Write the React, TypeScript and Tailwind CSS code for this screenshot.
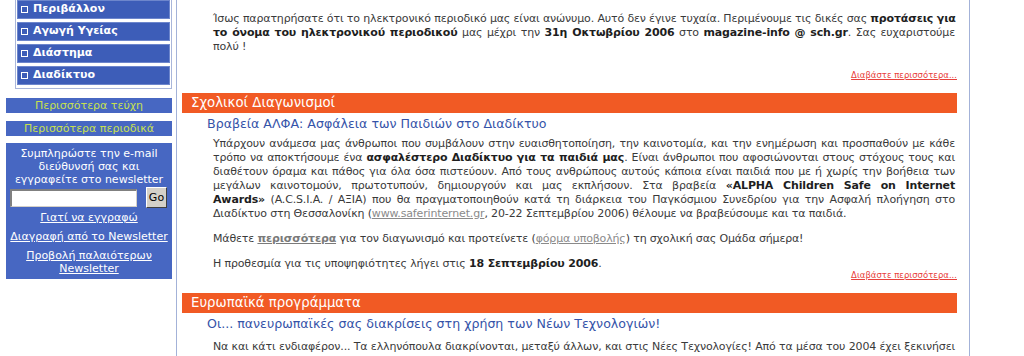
import React from "react";

const navItems = ["Περιβάλλον", "Αγωγή Υγείας", "Διάστημα", "Διαδίκτυο"];

// one full, justified line of a paragraph (keeps the reference's line breaks)
function J({ children }: { children: React.ReactNode }) {
  return <span className="block whitespace-nowrap text-justify [text-align-last:justify]">{children}</span>;
}

function B({ children }: { children: React.ReactNode }) {
  return <b className="text-[#1e1e1e]">{children}</b>;
}

function ReadMore() {
  return (
    <div className="text-right pr-[12px] text-[8.5px] leading-[10px] tracking-normal">
      <a href="#" className="text-[#e8413b] underline">
        Διαβάστε περισσότερα...
      </a>
    </div>
  );
}

function SectionBar({ title }: { title: string }) {
  return (
    <div className="ml-[5px] mr-[12px] h-[20px] bg-[#f15a24] pl-[9px] text-[13.3px] leading-[20px] text-white tracking-normal">
      {title}
    </div>
  );
}

function Sidebar() {
  return (
    <aside className="w-[176px] shrink-0 text-[11px]">
      {/* category menu (scrolled, top cut off) */}
      <div className="ml-[15px] mr-[4px] -mt-[3px] border border-[#a9b6da] px-[1px] pt-[2px] pb-[3px] flex flex-col gap-[3px]">
        {navItems.map((n) => (
          <div
            key={n}
            className="h-[19px] bg-[#3d5db8] border border-[#6d86cc] flex items-center gap-[5px] pl-[3px] font-bold text-white"
          >
            <span className="w-[7px] h-[7px] border border-white" />
            {n}
          </div>
        ))}
      </div>

      <div className="mt-[9px] ml-[6px] mr-[4px] h-[15px] bg-[#4767c2] text-center leading-[15px] text-[#c8e14e]">
        Περισσότερα τεύχη
      </div>
      <div className="mt-[8px] ml-[6px] mr-[4px] h-[15px] bg-[#4767c2] text-center leading-[15px] text-[#c8e14e]">
        Περισσότερα περιοδικά
      </div>

      {/* newsletter */}
      <div className="mt-[7px] ml-[6px] mr-[4px] bg-[#4767c2] text-white text-center pt-[4px] pb-[4px] px-[4px]">
        <p className="leading-[13px]">
          Συμπληρώστε την e-mail
          <br />
          διεύθυνσή σας και
          <br />
          εγγραφείτε στο newsletter
        </p>
        <div className="mt-[1px] flex items-center justify-between">
          <input
            className="w-[127px] h-[18px] bg-white border-t-2 border-l-2 border-[#808080] border-b border-r border-b-[#d4d0c8] border-r-[#d4d0c8]"
            type="text"
          />
          <button className="w-[21px] h-[21px] mr-[1px] bg-[#d4d0c8] border border-t-white border-l-white border-b-[#404040] border-r-[#404040] text-black text-[11px] leading-none">
            Go
          </button>
        </div>
        <div className="mt-[3px] flex flex-col gap-[6px] leading-[13px]">
          <a href="#" className="underline">Γιατί να εγγραφώ</a>
          <a href="#" className="underline">Διαγραφή από το Newsletter</a>
          <a href="#" className="underline">
            Προβολή παλαιότερων
            <br />
            Newsletter
          </a>
        </div>
      </div>
    </aside>
  );
}

export default function App() {
  return (
    <div className="w-[1024px] h-[356px] overflow-hidden bg-white flex font-['DejaVu_Sans',sans-serif] text-[#3a3a3a]">
      <Sidebar />
      <div className="w-px shrink-0 bg-[#a3b2d8]" />

      <main className="w-[792px] shrink-0 text-[11px] leading-[14px] tracking-[-0.15px]">
        <p className="mt-[12px] ml-[36px] mr-[14px]">
          <J>
            Ίσως παρατηρήσατε ότι το ηλεκτρονικό περιοδικό μας είναι ανώνυμο. Αυτό δεν έγινε τυχαία. Περιμένουμε τις
            δικές σας <B>προτάσεις για</B>
          </J>
          <J>
            <B>το όνομα του ηλεκτρονικού περιοδικού</B> μας μέχρι την <B>31η Οκτωβρίου 2006</B> στο{" "}
            <B>magazine-info @ sch.gr</B>. Σας ευχαριστούμε
          </J>
          <span className="block">πολύ !</span>
        </p>
        <div className="mt-[16px]">
          <ReadMore />
        </div>

        <div className="mt-[13px]">
          <SectionBar title="Σχολικοί Διαγωνισμοί" />
        </div>
        <h3 className="mt-[3px] ml-[30px] text-[12.6px] leading-[16px] tracking-normal text-[#3553a8]">
          Βραβεία ΑΛΦΑ: Ασφάλεια των Παιδιών στο Διαδίκτυο
        </h3>
        <div className="ml-[36px] mr-[14px] flex flex-col gap-[11px]">
          <p className="mt-[5px]">
            <J>
              Υπάρχουν ανάμεσα μας άνθρωποι που συμβάλουν στην ευαισθητοποίηση, την καινοτομία, και την ενημέρωση και
              προσπαθούν με κάθε
            </J>
            <J>
              τρόπο να αποκτήσουμε ένα <B>ασφαλέστερο Διαδίκτυο για τα παιδιά μας</B>. Είναι άνθρωποι που
              αφοσιώνονται στους στόχους τους και
            </J>
            <J>
              διαθέτουν όραμα και πάθος για όλα όσα πιστεύουν. Από τους ανθρώπους αυτούς κάποια είναι παιδιά που με ή
              χωρίς την βοήθεια των
            </J>
            <J>
              μεγάλων καινοτομούν, πρωτοτυπούν, δημιουργούν και μας εκπλήσουν. Στα βραβεία{" "}
              <B>«ALPHA Children Safe on Internet</B>
            </J>
            <J>
              <B>Awards»</B> (A.C.S.I.A. / ΑΞΙΑ) που θα πραγματοποιηθούν κατά τη διάρκεια του Παγκόσμιου Συνεδρίου για
              την Ασφαλή πλοήγηση στο
            </J>
            <span className="block">
              Διαδίκτυο στη Θεσσαλονίκη (
              <a href="#" className="underline text-[#8a8a8a]">www.saferinternet.gr</a>, 20-22 Σεπτεμβρίου 2006)
              θέλουμε να βραβεύσουμε και τα παιδιά.
            </span>
          </p>
          <p>
            Μάθετε <a href="#" className="underline font-bold text-[#7a7a7a]">περισσότερα</a> για τον διαγωνισμό και
            προτείνετε (<a href="#" className="underline text-[#8a8a8a]">φόρμα υποβολής</a>) τη σχολική σας Ομάδα σήμερα!
          </p>
          <p>
            Η προθεσμία για τις υποψηφιότητες λήγει στις <B>18 Σεπτεμβρίου 2006</B>.
          </p>
        </div>
        <div className="-mt-[1px]">
          <ReadMore />
        </div>

        <div className="mt-[13px]">
          <SectionBar title="Ευρωπαϊκά προγράμματα" />
        </div>
        <h3 className="mt-[3px] ml-[30px] text-[12.6px] leading-[16px] tracking-normal text-[#3553a8]">
          Οι... πανευρωπαϊκές σας διακρίσεις στη χρήση των Νέων Τεχνολογιών!
        </h3>
        <p className="mt-[8px] ml-[36px] mr-[14px]">
          <J>
            Να και κάτι ενδιαφέρον... Τα ελληνόπουλα διακρίνονται, μεταξύ άλλων, και στις Νέες Τεχνολογίες! Από τα μέσα
            του 2004 έχει ξεκινήσει
          </J>
        </p>
      </main>

      <div className="w-px shrink-0 bg-[#a3b2d8]" />
    </div>
  );
}
